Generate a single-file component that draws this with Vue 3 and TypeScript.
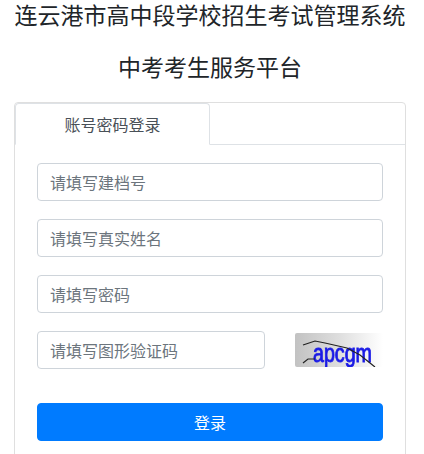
<script setup lang="ts">
import { ref } from 'vue'

const fields = [
  { key: 'archiveNo', placeholder: '请填写建档号', type: 'text' },
  { key: 'realName', placeholder: '请填写真实姓名', type: 'text' },
  { key: 'password', placeholder: '请填写密码', type: 'password' },
]

const form = ref<Record<string, string>>({ archiveNo: '', realName: '', password: '', captcha: '' })
</script>

<template>
  <main class="page">
    <h1 class="title">连云港市高中段学校招生考试管理系统</h1>
    <h2 class="title sub">中考考生服务平台</h2>

    <section class="card">
      <div class="tabs">
        <button type="button" class="tab active">账号密码登录</button>
      </div>

      <form class="form" @submit.prevent>
        <input
          v-for="field in fields"
          :key="field.key"
          v-model="form[field.key]"
          class="input"
          :type="field.type"
          :placeholder="field.placeholder"
        />

        <div class="captcha-row">
          <input v-model="form.captcha" class="input captcha-input" type="text" placeholder="请填写图形验证码" />
          <svg class="captcha" viewBox="0 0 88 34" width="88" height="34" role="img" aria-label="验证码">
            <defs>
              <linearGradient id="captchaBg" x1="0" y1="0" x2="1" y2="0">
                <stop offset="0" stop-color="#c2c2c2" />
                <stop offset="0.5" stop-color="#dedede" />
                <stop offset="1" stop-color="#ffffff" />
              </linearGradient>
            </defs>
            <rect width="88" height="34" rx="2" fill="url(#captchaBg)" />
            <text x="18" y="29" class="captcha-text" textLength="59" lengthAdjust="spacingAndGlyphs">apcgm</text>
            <path d="M8 12 L20 8 L30 10 L52 15 L65 22 L80 34" fill="none" stroke="#222" stroke-width="1.2" />
            <path d="M8 30 L13 26 L20 26" fill="none" stroke="#222" stroke-width="1.2" />
          </svg>
        </div>

        <button type="submit" class="submit">登录</button>
      </form>
    </section>
  </main>
</template>

<style scoped>
.page {
  width: 424px;
  height: 454px;
  overflow: hidden;
  padding: 0 18px 0 14px;
  box-sizing: border-box;
  color: #212529;
  font-family: "Noto Sans CJK SC", "Liberation Sans", sans-serif;
}

.title {
  margin: 0 0 24px;
  font-size: 23px;
  font-weight: 400;
  line-height: 28px;
  text-align: center;
  white-space: nowrap;
}

.sub {
  margin-bottom: 22px;
}

.card {
  border: 1px solid #dfdfdf;
  border-radius: 4px;
  height: 400px;
  box-sizing: border-box;
}

.tabs {
  display: flex;
  height: 41px;
  border-bottom: 1px solid #dee2e6;
}

.tab {
  width: 195px;
  height: 42px;
  padding: 0;
  box-sizing: border-box;
  border: 1px solid #dee2e6;
  border-bottom-color: #fff;
  border-radius: 4px 4px 0 0;
  background: #fff;
  color: #495057;
  font: inherit;
  font-size: 16px;
  cursor: pointer;
}

.form {
  display: flex;
  flex-direction: column;
  gap: 18px;
  padding: 18px 22px 0;
}

.input {
  width: 100%;
  height: 38px;
  box-sizing: border-box;
  padding: 6px 12px;
  border: 1px solid #ced4da;
  border-radius: 4px;
  background: #fff;
  color: #495057;
  font: inherit;
  font-size: 16px;
  outline: none;
}

.input::placeholder {
  color: #6c757d;
  opacity: 1;
}

.captcha-row {
  display: flex;
  align-items: center;
  justify-content: space-between;
}

.captcha-input {
  width: 228px;
}

.captcha {
  display: block;
  filter: blur(0.4px);
}

.captcha-text {
  fill: #1a1ae6;
  stroke: #1a1ae6;
  stroke-width: 0.9px;
  font-family: "Liberation Sans", sans-serif;
  font-size: 25px;
  font-weight: 400;
}

.submit {
  height: 38px;
  margin-top: 16px;
  border: 1px solid #007bff;
  border-radius: 4px;
  background: #007bff;
  color: #fff;
  font: inherit;
  font-size: 16px;
  cursor: pointer;
}
</style>

<style>
body {
  background: #fff;
}
</style>
